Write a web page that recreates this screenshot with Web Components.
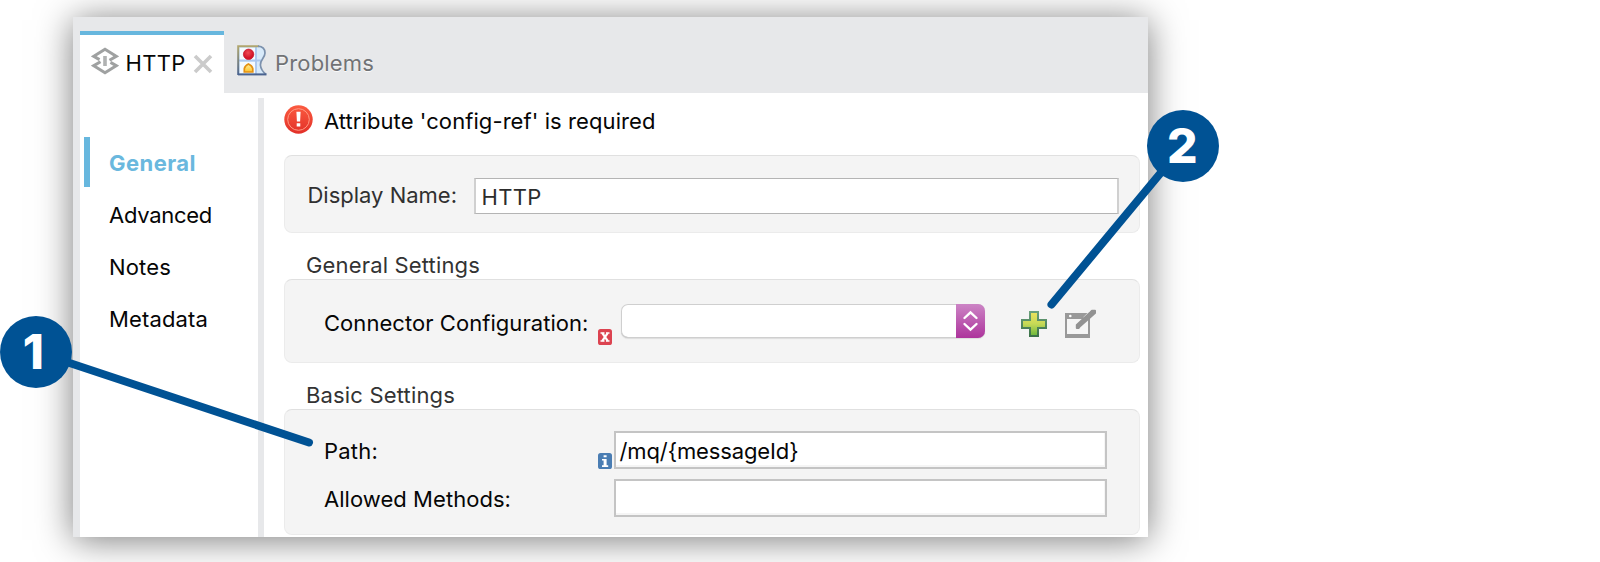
<!DOCTYPE html>
<html lang="en">
<head>
<meta charset="utf-8">
<title>HTTP properties</title>
<style>
html,body{margin:0;background:#fff;width:1600px;height:562px;overflow:hidden;font-family:Inter,"Liberation Sans",sans-serif;font-size:22px;color:#060606}
</style>
</head>
<body>
<guide-page></guide-page>
<script>
const define = (name, html, setup) => {
  const t = document.createElement('template');
  t.innerHTML = html;
  customElements.define(name, class extends HTMLElement {
    constructor() {
      super();
      this.attachShadow({mode: 'open'}).append(t.content.cloneNode(true));
    }
    connectedCallback() { if (setup) setup(this, this.shadowRoot); }
  });
};

/* Text run whose tracking is adjusted to fill the width given in "w". */
define('ui-text', `<style>:host{display:block;white-space:nowrap;line-height:28px;flex:none}span{display:inline-block}</style><span><slot></slot></span>`,
  (el, root) => {
    const w = parseFloat(el.getAttribute('w'));
    if (!w) return;
    el.style.width = w + 'px';
    const s = root.querySelector('span');
    const n = el.textContent.length;
    s.style.letterSpacing = ((w - s.getBoundingClientRect().width) / n).toFixed(3) + 'px';
  });

define('connector-icon', `<style>:host{display:block;width:28px;height:28px;flex:none}svg{display:block}</style>
<svg width="28" height="28" viewBox="0 0 28 28" fill="none" stroke="#9fa1a1" stroke-width="3">
<path d="M8.500 12.600 2.800 9.300 14 2.300 25.200 9.300 18.500 13.200"/>
<path d="M19.500 15.400 25.200 18.700 14 25.700 2.800 18.700 9.500 14.800"/>
<path d="M14 9v10" stroke-width="3.600" stroke="#b0b2b2"/></svg>`);

define('close-icon', `<style>:host{display:block;width:20px;height:20px;flex:none}svg{display:block}</style>
<svg width="20" height="20" viewBox="0 0 20 20"><path d="M2 2 18 18M18 2 2 18" stroke="#cbcbcb" stroke-width="3.600" fill="none"/></svg>`);

define('problems-icon', `<style>:host{display:block;width:30px;height:31px;flex:none}svg{display:block}</style>
<svg width="30" height="31" viewBox="0 0 30 31">
<defs><linearGradient id="a" x1="0" y1="0" x2="0" y2="1"><stop offset="0" stop-color="#b0a66f"/><stop offset="1" stop-color="#4c6591"/></linearGradient>
<linearGradient id="b" x1="0" y1="0" x2="0" y2="1"><stop offset="0" stop-color="#fff0a0"/><stop offset="1" stop-color="#ffc229"/></linearGradient>
<radialGradient id="c" cx=".45" cy=".35"><stop offset="0" stop-color="#ee4b55"/><stop offset="1" stop-color="#d31429"/></radialGradient></defs>
<path d="M1 1H23Q28 2 28 8C28 14 23 15 23.5 20Q24 26 29 30H1Z" fill="#d8eafa"/>
<path d="M3 3h15v12H3zM3 17h15v11H3z" fill="#f5faff"/>
<path d="M2 15.5h22M19 2v27" stroke="#abc7ef" stroke-width="1.8"/>
<path d="M1.2 30V1.2H22" fill="none" stroke="url(#a)" stroke-width="2"/>
<path d="M21 1.2Q28 1.8 28 8C28 13 23 15 23.4 20Q23.8 25 29 29.5" fill="none" stroke="#7c91ad" stroke-width="1.7"/>
<path d="M1 29.4H29.5" stroke="#49628f" stroke-width="2"/>
<circle cx="11.6" cy="9.3" r="5.2" fill="url(#c)" stroke="#c71c2f" stroke-width=".8"/>
<path d="M7.3 27V23.6Q8 20.5 11.4 19Q15 20.5 15.8 23.6V27Z" fill="url(#b)" stroke="#e39113" stroke-width="1.7"/></svg>`);

define('error-icon', `<style>:host{display:block;width:29px;height:29px;flex:none}svg{display:block}</style>
<svg width="29" height="29" viewBox="0 0 29 29"><defs><linearGradient id="e" x1="0" y1="0" x2="0" y2="1"><stop offset="0" stop-color="#fb5b40"/><stop offset="1" stop-color="#e23028"/></linearGradient></defs>
<circle cx="14.5" cy="14.5" r="14.2" fill="url(#e)"/><circle cx="14.5" cy="14.5" r="10.8" fill="none" stroke="#ff9a84" stroke-width="1"/>
<path d="M12.4 6.8h4.2l-.5 9.6h-3.2zM12.7 18.3h3.6v3.2h-3.6z" fill="#fff"/></svg>`);

define('field-mark', `<style>:host{display:block;width:14px;height:16px;flex:none}svg{display:block}.info{display:none}:host([kind=info]) .info{display:block}:host([kind=info]) .bad{display:none}</style>
<svg class="bad" width="14" height="16" viewBox="0 0 14 16"><rect width="14" height="16" rx="2.6" fill="#dc4350"/><path d="M4.3 4.2 9.7 11.8M9.7 4.2 4.3 11.8" stroke="#fff" stroke-width="2.2"/><path d="M2.5 4h4M8 4h3.5M2.5 12h4M8 12h3.5" stroke="#fff" stroke-width="1.4"/></svg>
<svg class="info" width="14" height="16" viewBox="0 0 14 16"><rect width="14" height="16" rx="2.6" fill="#4a7db3"/><path d="M5.6 2.2h3v2h-3zM4 6h4.6v6.2h1.6v1.7H4v-1.7h1.6V7.6H4z" fill="#fff"/></svg>`);

define('add-icon', `<style>:host{display:block;width:26px;height:26px;flex:none}svg{display:block}</style>
<svg width="26" height="26" viewBox="0 0 26 26"><defs><linearGradient id="g" x1="0" y1="0" x2="0" y2="1"><stop offset="0" stop-color="#eee35c"/><stop offset=".5" stop-color="#c5d957"/><stop offset="1" stop-color="#67b63b"/></linearGradient><linearGradient id="h" x1="0" y1="0" x2="0" y2="1"><stop offset="0" stop-color="#6aa07b"/><stop offset="1" stop-color="#3b7148"/></linearGradient></defs>
<path d="M9 1h8v8h8v8h-8v8H9v-8H1V9h8z" fill="url(#g)" stroke="url(#h)" stroke-width="2"/></svg>`);

define('edit-icon', `<style>:host{display:block;width:31px;height:29px;flex:none}svg{display:block}</style>
<svg width="31" height="29" viewBox="0 0 31 29"><path d="M0 4h25v25H0z" fill="#999"/><path d="M2 10h21v15H2z" fill="#f5f5f5"/><circle cx="5.300" cy="7" r="1.300" fill="#fff"/>
<path d="M20 10 25.500 4.500" stroke="#f5f5f5" stroke-width="5"/><path d="M11.800 19V16L25.500 3.300 27 1.800h3V4L15 17.200 13.500 19Z" fill="#929292" stroke="#929292" stroke-width="2" stroke-linejoin="round"/></svg>`);

define('tab-bar', `<style>
:host{display:flex;height:76px;padding-left:7px;background:#e7e8ea;box-sizing:border-box}
.active{box-sizing:border-box;width:144px;margin-top:14px;border-top:4px solid #67b7de;background:#fff;display:flex;padding:12px 0 0 11px}
.active ui-text{margin:2px 0 0 7px}.active close-icon{margin:7px 0 0 7px}
.idle{display:flex;padding:28px 0 0 13.500px;color:#717275;text-shadow:0 1px #fafafa}
.idle ui-text{margin:4px 0 0 8px}
</style><div class="active"><connector-icon></connector-icon><ui-text w="60">HTTP</ui-text><close-icon></close-icon></div>
<div class="idle"><problems-icon></problems-icon><ui-text w="99">Problems</ui-text></div>`);

define('side-nav', `<style>
:host{display:block;box-sizing:border-box;width:178px;padding:44px 0 0 4px}
div{display:flex;align-items:center;height:50px;margin-bottom:2px;border-left:6.500px solid transparent;padding-left:19.500px}
ui-text{padding-top:2px}
.on{border-color:#67b7de;color:#6ab8de;font-weight:700}
</style><div class="on"><ui-text w="87">General</ui-text></div><div><ui-text w="103">Advanced</ui-text></div><div><ui-text w="62">Notes</ui-text></div><div><ui-text w="99">Metadata</ui-text></div>`);

define('group-box', `<style>:host{display:block;box-sizing:border-box;width:856px;border:1px solid #ebebeb;border-top-color:#e0e0e0;border-radius:8px;background:#f4f4f4}</style><slot></slot>`);

define('text-field', `<style>:host{display:block;box-sizing:border-box;width:493px;height:38px;border:2px solid #c4c4c4;background:#fff;padding:4px 0 0 4px;box-shadow:inset -1px -2px #f5f5f5}
:host([thin]){width:644.500px;height:36px;border-width:1px 2px 1px 2px;border-color:#b4b4b4 #d0d0d0;padding:4px 0 0 5.500px;color:#2c2c2c;box-shadow:none}</style><slot></slot>`);

define('combo-box', `<style>:host{display:flex;justify-content:flex-end;box-sizing:border-box;width:364px;height:34px;border-radius:7px;background:#fff;box-shadow:inset 0 0 0 1px #cfcfcf,inset 0 -1px #b5b5b5,0 1px 1px #ddd;overflow:hidden}
.b{width:29px;height:34px;background:linear-gradient(#cc84c5,#ad349c)}svg{display:block}</style>
<div class="b"><svg width="29" height="34" viewBox="0 0 29 34"><path d="M8.500 14 14.500 8.300 20.500 14M8.500 20 14.500 25.700 20.500 20" fill="none" stroke="#fff" stroke-width="2.400" stroke-linecap="round"/></svg></div>`);

define('property-form', `<style>
:host{display:block;padding-left:20px}
.msg{display:flex;padding-top:11.500px;height:50.500px}.msg ui-text{margin:2.500px 0 0 11.500px}
.row{display:flex}
.title{color:#333;padding-left:22.500px;height:28px}
.name{color:#303030;padding:22px 0 0 23px}
.name ui-text.l{margin:3px 17px 0 0}
.conf{padding:24px 0 0 39.500px}
.conf .l{margin-top:5px}.conf field-mark{margin:25px 9px 0 9px}
.conf add-icon{margin:7px 18px 0 36.500px}.conf edit-icon{margin-top:5px}
.path{padding:21px 0 0 39.500px}.path .l{width:273.500px;padding-top:6px;box-sizing:border-box}
.path field-mark{margin:22px 2px 0 0}
.allow{padding:10px 0 0 39.500px}.allow .l{width:289.500px;padding-top:6px}
</style>
<div class="msg"><error-icon></error-icon><ui-text w="331.5">Attribute 'config-ref' is required</ui-text></div>
<group-box style="height:78px"><div class="row name"><ui-text class="l" w="149.5">Display Name:</ui-text><text-field thin><ui-text w="60">HTTP</ui-text></text-field></div></group-box>
<div class="title" style="padding-top:18px"><ui-text w="174">General Settings</ui-text></div>
<group-box style="height:84px"><div class="row conf"><ui-text class="l" w="264.5">Connector Configuration:</ui-text><field-mark></field-mark><combo-box></combo-box><add-icon></add-icon><edit-icon></edit-icon></div></group-box>
<div class="title" style="padding-top:18px"><ui-text w="149">Basic Settings</ui-text></div>
<group-box style="height:126px"><div class="row path"><div class="l"><ui-text w="54">Path:</ui-text></div><field-mark kind="info"></field-mark><text-field><ui-text w="179">/mq/{messageId}</ui-text></text-field></div>
<div class="row allow"><div class="l"><ui-text w="187">Allowed Methods:</ui-text></div><text-field></text-field></div></group-box>`);

define('app-window', `<style>
:host{display:block;box-sizing:border-box;width:1075px;height:520px;background:#fff;box-shadow:0 3px 34px rgba(0,0,0,.52)}
.body{display:flex;height:444px;overflow:hidden}
.edge{width:7px;background:#e7e8ea}.div{width:6px;margin-top:5px;background:#e7e8ea}
</style><tab-bar></tab-bar><div class="body"><div class="edge"></div><side-nav></side-nav><div class="div"></div><property-form></property-form></div>`);

/* Numbered annotation drawn over the window. */
define('call-out', `<style>
:host{position:absolute;width:72px;height:72px;border-radius:50%;background:#005294;color:#fff;display:flex;align-items:center;justify-content:center;font-weight:800;font-size:48px;line-height:72px}
span{position:relative;left:var(--nudge,0)}
</style><span><slot></slot></span>`);

define('guide-page', `<style>
:host{display:block;position:relative;width:1600px;height:562px;overflow:hidden;box-sizing:border-box;padding:17px 0 0 72.500px}
.lines{position:absolute;left:0;top:0}
</style><app-window></app-window>
<svg class="lines" width="1600" height="562"><path d="M36.500 352 309 442.500M1183 146 1051.500 304.500" stroke="#005294" stroke-width="8" stroke-linecap="round"/></svg>
<call-out style="left:.3px;top:316px;--nudge:-3px">1</call-out><call-out style="left:1147.200px;top:110px;--nudge:-1px">2</call-out>`);
</script>
</body>
</html>
